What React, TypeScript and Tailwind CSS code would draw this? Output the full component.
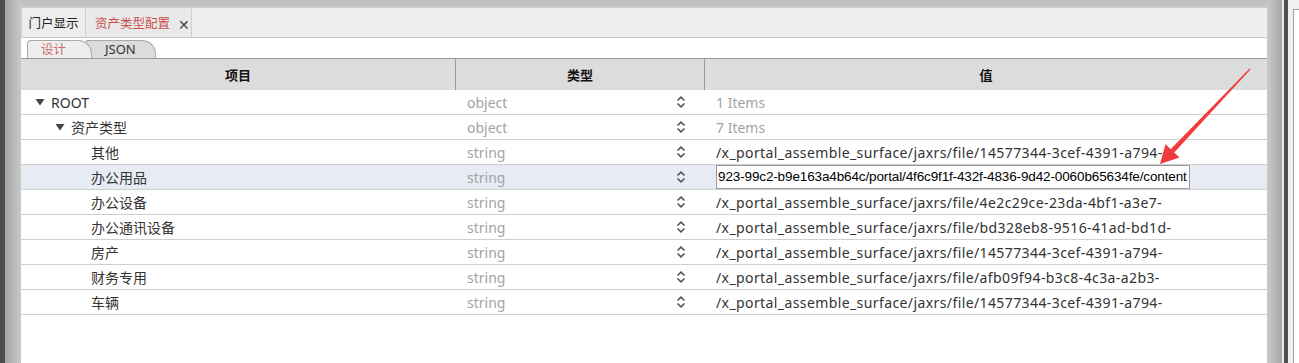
const rows = [
  { label: "ROOT", level: 0, toggle: true, type: "object", value: "1 Items", muted: true },
  { label: "资产类型", level: 1, toggle: true, type: "object", value: "7 Items", muted: true },
  { label: "其他", level: 2, type: "string", value: "/x_portal_assemble_surface/jaxrs/file/14577344-3cef-4391-a794-" },
  { label: "办公用品", level: 2, type: "string", value: "923-99c2-b9e163a4b64c/portal/4f6c9f1f-432f-4836-9d42-0060b65634fe/content", editing: true },
  { label: "办公设备", level: 2, type: "string", value: "/x_portal_assemble_surface/jaxrs/file/4e2c29ce-23da-4bf1-a3e7-" },
  { label: "办公通讯设备", level: 2, type: "string", value: "/x_portal_assemble_surface/jaxrs/file/bd328eb8-9516-41ad-bd1d-" },
  { label: "房产", level: 2, type: "string", value: "/x_portal_assemble_surface/jaxrs/file/14577344-3cef-4391-a794-" },
  { label: "财务专用", level: 2, type: "string", value: "/x_portal_assemble_surface/jaxrs/file/afb09f94-b3c8-4c3a-a2b3-" },
  { label: "车辆", level: 2, type: "string", value: "/x_portal_assemble_surface/jaxrs/file/14577344-3cef-4391-a794-" },
];

const indent = ["pl-[14px]", "pl-[34px]", "pl-[70px]"];

function UpDown() {
  return (
    <svg width="10" height="12" viewBox="0 0 10 12" fill="none" stroke="#555" strokeWidth="1.6">
      <path d="M1.5 4.5 L5 1.2 L8.5 4.5" />
      <path d="M1.5 7.5 L5 10.8 L8.5 7.5" />
    </svg>
  );
}

function Caret() {
  return (
    <svg width="10" height="8" viewBox="0 0 10 8" className="mr-[6px] shrink-0">
      <path d="M0.5 1 L9.5 1 L5 7.5 Z" fill="#444" />
    </svg>
  );
}

export default function App() {
  return (
    <div className="relative flex h-[363px] w-[1299px] overflow-hidden bg-[#c0c0c0] font-['Noto_Sans','Noto_Sans_CJK_SC',sans-serif] text-[14px] text-[#333]">
      {/* left frame */}
      <div className="w-[5px] shrink-0 bg-[#4d4d4d]" />
      <div className="w-[16px] shrink-0 bg-gradient-to-r from-[#a3a3a3] to-[#c9c9c9]" />

      <div className="flex w-[1246px] shrink-0 flex-col">
        <div className="h-[7px] shrink-0 bg-gradient-to-b from-[#bdbdbd] to-[#c6c6c6]" />
        <div className="flex flex-1 flex-col bg-white">
          {/* top tabs */}
          <div className="flex h-[31px] shrink-0 border-b border-[#c8c8c8] border-t border-t-[#d0d0d0] bg-[#efefef]">
            <div className="flex w-[65px] items-center justify-center border-x border-[#d0d0d0] bg-[#ededed] pt-[2px] font-['Noto_Sans_CJK_SC',sans-serif] text-[12.5px] text-[#222]">
              门户显示
            </div>
            <div className="flex w-[106px] items-center gap-[8px] border-r border-[#d0d0d0] bg-[#e9e9e9] pl-[9px] pt-[2px] font-['Noto_Sans_CJK_SC',sans-serif] text-[12.5px] text-[#c9504f]">
              资产类型配置
              <span className="text-[14px] leading-none text-[#444]">✕</span>
            </div>
          </div>

          {/* sub tabs */}
          <div className="flex h-[21px] shrink-0 items-end border-b border-[#9a9a9a] pl-[6px]">
            <div className="relative z-10 flex h-[18px] w-[65px] items-center rounded-tl-[4px] rounded-tr-[14px] border border-b-0 border-[#a8a8a8] bg-[#eeeeee] pl-[13px] font-['Noto_Sans_CJK_SC',sans-serif] text-[12.5px] leading-none text-[#d06a6a]">
              设计
            </div>
            <div className="-ml-[6px] flex h-[18px] w-[70px] items-center rounded-tr-[14px] border border-b-0 border-[#a8a8a8] bg-[#dcdcdc] pl-[18px] text-[13px] leading-none text-[#333]">
              JSON
            </div>
          </div>

          {/* table header */}
          <div className="flex h-[31px] shrink-0 bg-[#dcdcdc] font-['Noto_Sans_CJK_SC',sans-serif] text-[13px] font-bold text-[#111]">
            <div className="flex w-[435px] items-center justify-center border-r border-[#9a9a9a]">项目</div>
            <div className="flex w-[249px] items-center justify-center border-r border-[#9a9a9a]">类型</div>
            <div className="flex flex-1 items-center justify-center">值</div>
          </div>

          {/* rows */}
          {rows.map((r) => (
            <div
              key={r.label}
              className={`flex h-[25px] shrink-0 border-b border-[#cfcfcf] ${r.editing ? "bg-[#e7ebf4]" : ""}`}
            >
              <div className={`flex w-[435px] items-center ${indent[r.level]} text-[#333]`}>
                {r.toggle ? <Caret /> : null}
                <span>{r.label}</span>
              </div>
              <div className="flex w-[249px] items-center justify-between pl-[11px] pr-[19px] text-[#a3a3a3]">
                <span>{r.type}</span>
                <UpDown />
              </div>
              <div className="flex flex-1 items-center pl-[11px]">
                {r.editing ? (
                  <div className="flex h-[24px] w-[474px] items-center overflow-hidden border border-[#9a9a9a] bg-white pl-[1px] font-['Liberation_Sans',sans-serif] text-[13.5px] tracking-[-0.13px] whitespace-nowrap text-black">
                    {r.value}
                  </div>
                ) : (
                  <span className={`whitespace-nowrap ${r.muted ? "text-[#a3a3a3]" : "tracking-[0.4px] text-[#333]"}`}>{r.value}</span>
                )}
              </div>
            </div>
          ))}
          <div className="flex-1" />
        </div>
      </div>

      {/* right frame */}
      <div className="w-[15px] shrink-0 bg-gradient-to-r from-[#cacaca] to-[#a6a6a6]" />
      <div className="w-[2px] shrink-0 bg-[#e8e8e8]" />
      <div className="w-[4px] shrink-0 bg-[#4f4f4f]" />
      <div className="flex flex-1 flex-col bg-[#f0f0f0] pl-[5px] pt-[9px]">
        <div className="flex-1 border-l border-t border-[#a0a0a0] bg-white" />
      </div>

      {/* red annotation arrow */}
      <svg className="pointer-events-none absolute left-0 top-0" width="1299" height="363">
        <polygon points="1249.6,68.6 1250.4,69.4 1174.2,152.6 1170.6,149.2" fill="#f23a3a" />
        <polygon points="1160,164 1179.5,157.5 1165.5,144.2" fill="#f23a3a" />
      </svg>
    </div>
  );
}
